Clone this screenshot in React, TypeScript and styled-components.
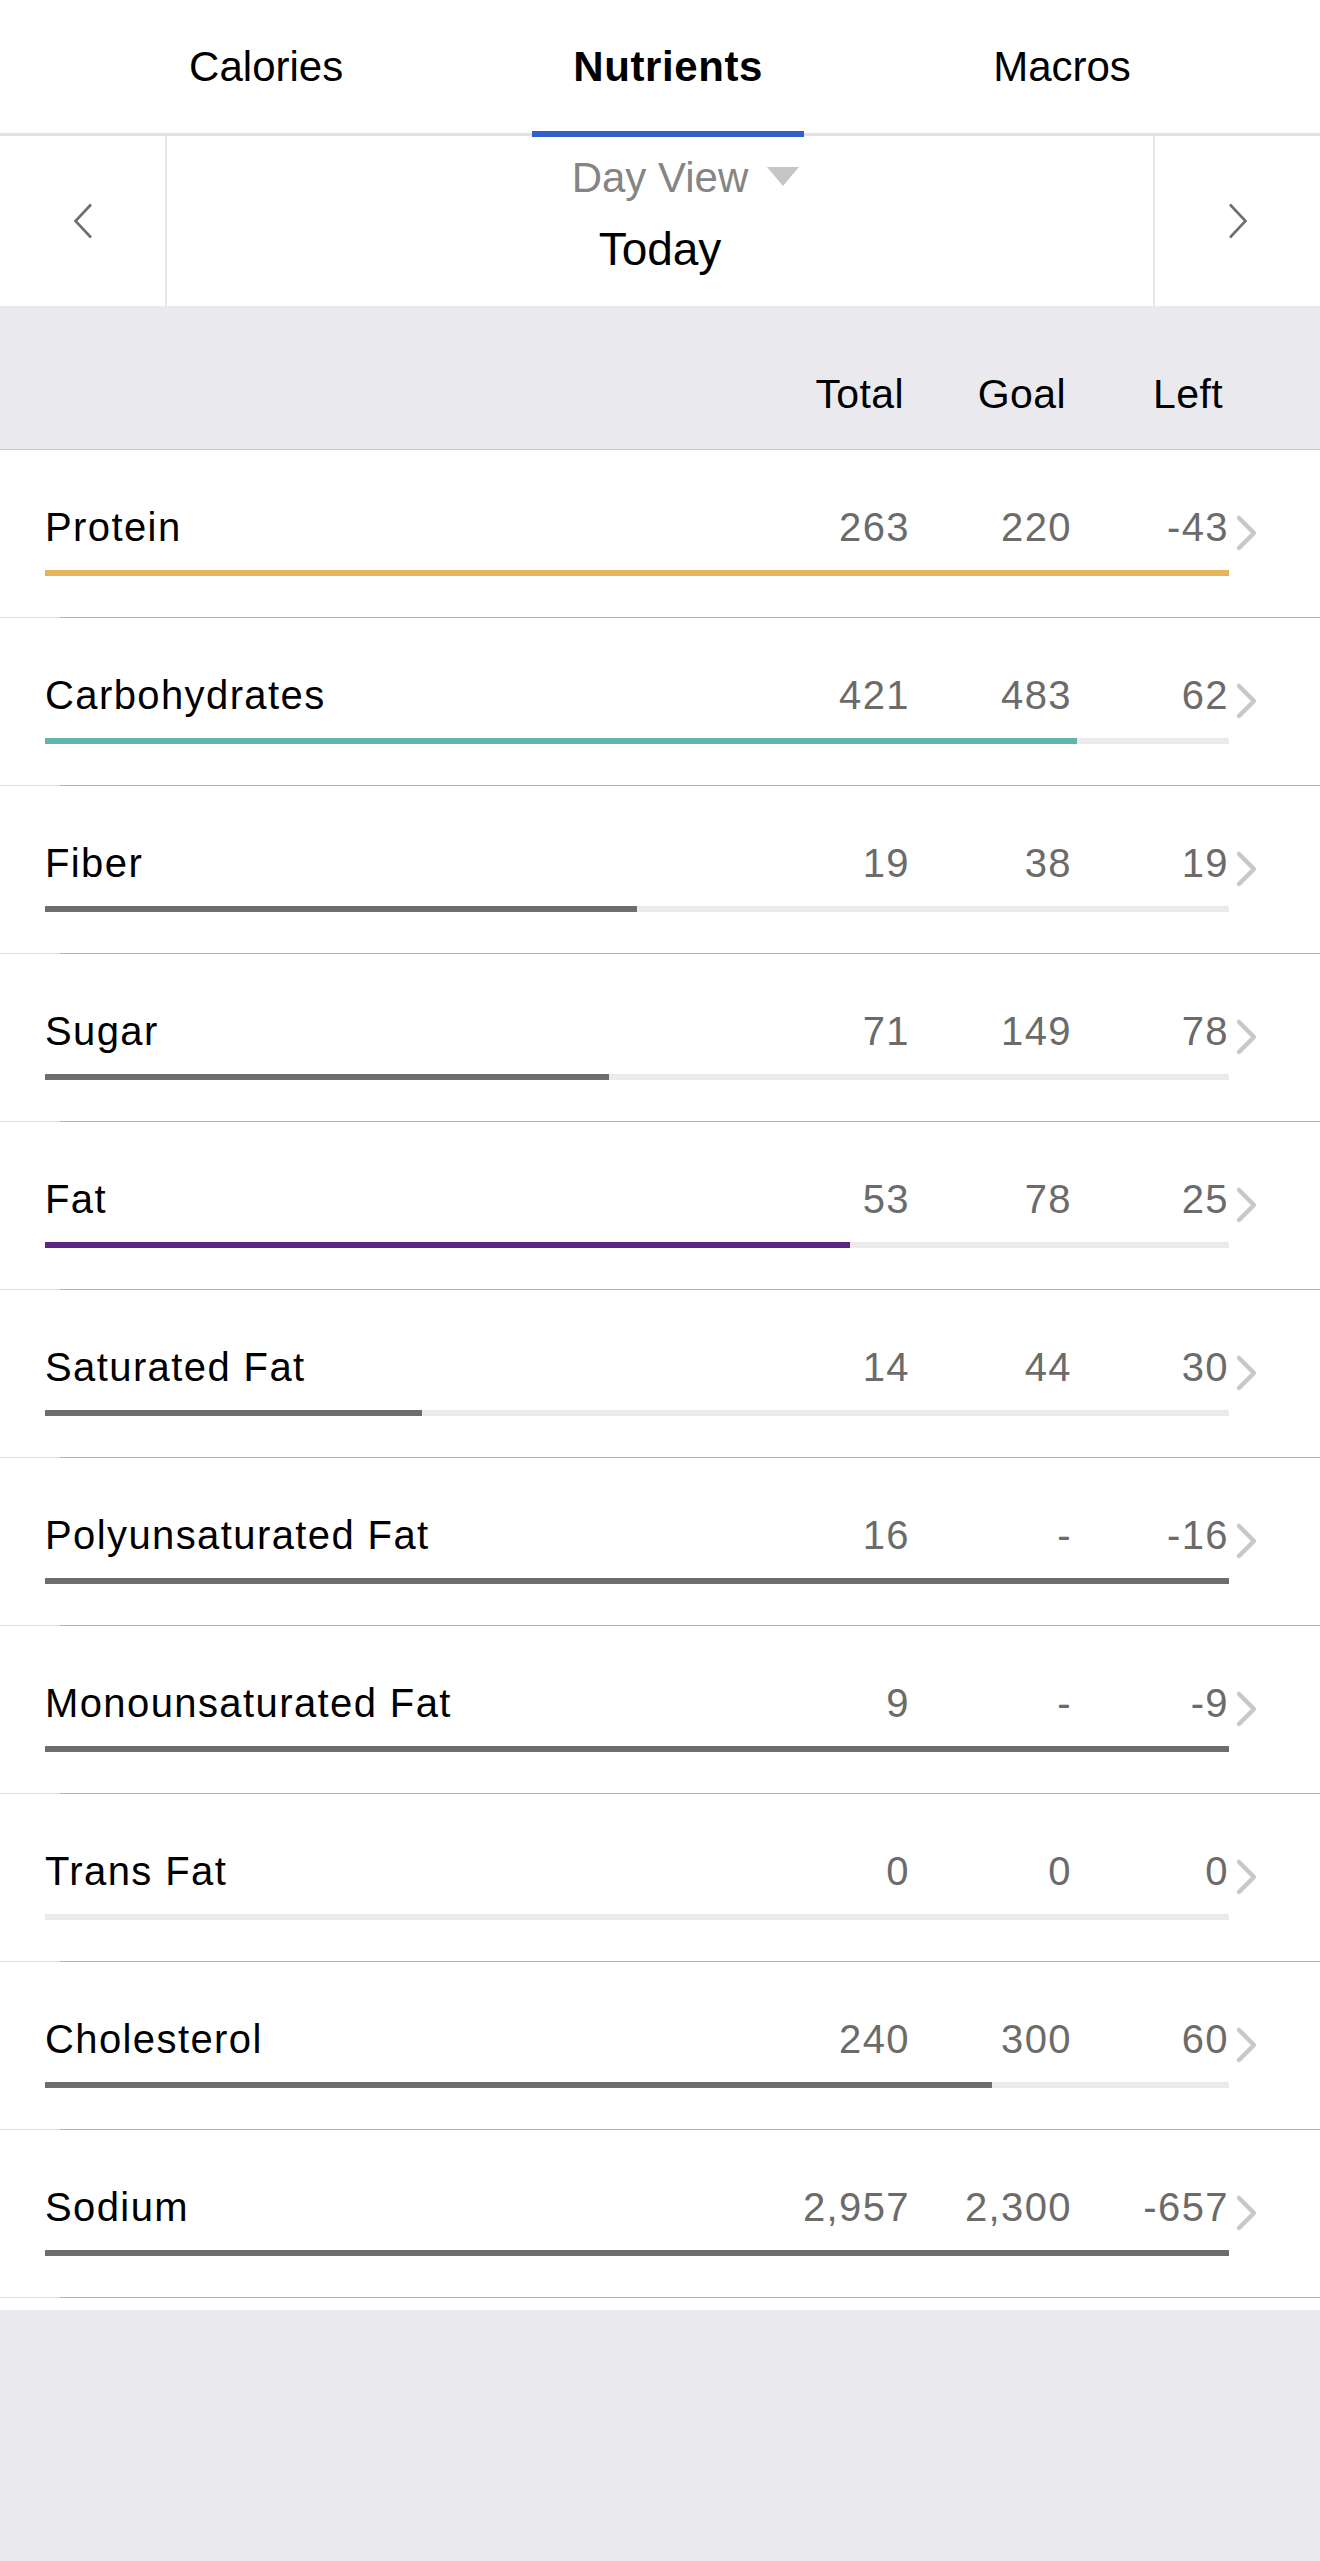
import React from "react";
import styled, { createGlobalStyle } from "styled-components";

const GlobalStyle = createGlobalStyle`
  html, body {
    margin: 0;
    padding: 0;
    background: #e9e9ee;
    font-family: "Liberation Sans", Arial, Helvetica, sans-serif;
  }
`;

const Page = styled.div`
  width: 1320px;
  background: #ffffff;
  padding-bottom: 12px;
`;

const TabBar = styled.nav`
  height: 133px;
  display: flex;
  justify-content: space-evenly;
  align-items: stretch;
  border-bottom: 3px solid #e2e2e4;
`;

const Tab = styled.div<{ $active?: boolean }>`
  position: relative;
  display: flex;
  align-items: center;
  padding: 0 41px;
  font-size: 42px;
  letter-spacing: ${(p) => (p.$active ? "0.6px" : "0")};
  font-weight: ${(p) => (p.$active ? 700 : 400)};
  color: #000;

  &::after {
    content: "";
    display: ${(p) => (p.$active ? "block" : "none")};
    position: absolute;
    left: 0;
    right: 0;
    bottom: -4px;
    height: 6px;
    background: #2e5fcb;
  }
`;

const DateNav = styled.div`
  display: flex;
  height: 170px;
`;

const NavButton = styled.div<{ $side: "left" | "right" }>`
  width: 165px;
  display: flex;
  align-items: center;
  justify-content: center;
  border-${(p) => (p.$side === "left" ? "right" : "left")}: 2px solid #e7e7e9;
`;

const NavCenter = styled.div`
  flex: 1;
  display: flex;
  flex-direction: column;
  align-items: center;
  padding-top: 19px;
`;

const ViewSelect = styled.div`
  position: relative;
  font-size: 42px;
  line-height: 46px;
  color: #858585;
`;

const Caret = styled.span`
  position: absolute;
  left: calc(100% + 19px);
  top: 12px;
  width: 0;
  height: 0;
  border-left: 16px solid transparent;
  border-right: 16px solid transparent;
  border-top: 19px solid #c6c6c8;
`;

const DayLabel = styled.div`
  margin-top: 23px;
  font-size: 46px;
  line-height: 50px;
  color: #000;
`;

const Columns = styled.div`
  display: grid;
  grid-template-columns: 1fr 160px 162px 157px 91px;
  padding-left: 45px;
`;

const HeaderBand = styled(Columns)`
  background: #e9e9ee;
  padding-top: 65px;
  padding-bottom: 32px;
  border-bottom: 1px solid #c9c9cc;
`;

const HeaderCell = styled.div<{ $col: number }>`
  grid-column: ${(p) => p.$col};
  text-align: right;
  padding-right: 6px;
  font-size: 41px;
  line-height: 46px;
  letter-spacing: 0.4px;
  color: #000;
`;

const Row = styled(Columns)`
  padding-top: 54px;
  height: 167px;
  box-sizing: border-box;
  align-content: start;
  background: #fff;
`;

const Separator = styled.div`
  height: 1px;
  background: linear-gradient(to right, #dedee0 0, #dedee0 60px, #b3b3b6 60px);
`;

const Label = styled.div`
  font-size: 40px;
  line-height: 46px;
  letter-spacing: 1.4px;
  color: #000;
  white-space: nowrap;
`;

const Value = styled.div`
  text-align: right;
  font-size: 40px;
  line-height: 46px;
  letter-spacing: 1.4px;
  color: #6b6b6b;
  white-space: nowrap;
`;

const Disclosure = styled.div`
  display: flex;
  align-items: center;
  padding-left: 5px;
  transform: translateY(7px);
`;

const Track = styled.div`
  grid-column: 1 / 5;
  margin-top: 20px;
  height: 6px;
  background: #ebebed;
`;

const Fill = styled.div<{ $color: string }>`
  height: 100%;
  background: ${(p) => p.$color};
`;

type Nutrient = {
  name: string;
  total: number;
  goal: number | null;
  color: string;
};

const nutrients: Nutrient[] = [
  { name: "Protein", total: 263, goal: 220, color: "#e9b35b" },
  { name: "Carbohydrates", total: 421, goal: 483, color: "#62b4ab" },
  { name: "Fiber", total: 19, goal: 38, color: "#6d6d6f" },
  { name: "Sugar", total: 71, goal: 149, color: "#6d6d6f" },
  { name: "Fat", total: 53, goal: 78, color: "#5b2585" },
  { name: "Saturated Fat", total: 14, goal: 44, color: "#6d6d6f" },
  { name: "Polyunsaturated Fat", total: 16, goal: null, color: "#6d6d6f" },
  { name: "Monounsaturated Fat", total: 9, goal: null, color: "#6d6d6f" },
  { name: "Trans Fat", total: 0, goal: 0, color: "#6d6d6f" },
  { name: "Cholesterol", total: 240, goal: 300, color: "#6d6d6f" },
  { name: "Sodium", total: 2957, goal: 2300, color: "#6d6d6f" },
];

const fmt = (n: number) => n.toLocaleString("en-US");

function ChevronLeft() {
  return (
    <svg width="20" height="36" viewBox="0 0 20 36">
      <path d="M18 1.5 L2.5 18 L18 34.5" fill="none" stroke="#6e6e70" strokeWidth="2.6" />
    </svg>
  );
}

function ChevronRight() {
  return (
    <svg width="20" height="36" viewBox="0 0 20 36">
      <path d="M2 1.5 L17.5 18 L2 34.5" fill="none" stroke="#6e6e70" strokeWidth="2.6" />
    </svg>
  );
}

function RowChevron() {
  return (
    <svg width="26" height="40" viewBox="0 0 26 40">
      <path
        d="M5 4 L20 19 L5 34"
        fill="none"
        stroke="#c8c8cc"
        strokeWidth="4.5"
        strokeLinecap="round"
        strokeLinejoin="round"
      />
    </svg>
  );
}

function NutrientRow({ item }: { item: Nutrient }) {
  const left = item.goal === null ? -item.total : item.goal - item.total;
  let pct = 0;
  if (item.goal === null) pct = item.total > 0 ? 1 : 0;
  else if (item.goal > 0) pct = Math.min(1, item.total / item.goal);

  return (
    <>
      <Row>
        <Label>{item.name}</Label>
        <Value>{fmt(item.total)}</Value>
        <Value>{item.goal === null ? "-" : fmt(item.goal)}</Value>
        <Value>{fmt(left)}</Value>
        <Disclosure>
          <RowChevron />
        </Disclosure>
        <Track>
          <Fill $color={item.color} style={{ width: `${pct * 100}%` }} />
        </Track>
      </Row>
      <Separator />
    </>
  );
}

export default function App() {
  return (
    <>
      <GlobalStyle />
      <Page>
        <TabBar>
          <Tab>Calories</Tab>
          <Tab $active>Nutrients</Tab>
          <Tab>Macros</Tab>
        </TabBar>
        <DateNav>
          <NavButton $side="left">
            <ChevronLeft />
          </NavButton>
          <NavCenter>
            <ViewSelect>
              Day View
              <Caret />
            </ViewSelect>
            <DayLabel>Today</DayLabel>
          </NavCenter>
          <NavButton $side="right">
            <ChevronRight />
          </NavButton>
        </DateNav>
        <HeaderBand>
          <HeaderCell $col={2}>Total</HeaderCell>
          <HeaderCell $col={3}>Goal</HeaderCell>
          <HeaderCell $col={4}>Left</HeaderCell>
        </HeaderBand>
        {nutrients.map((n) => (
          <NutrientRow key={n.name} item={n} />
        ))}
      </Page>
    </>
  );
}
